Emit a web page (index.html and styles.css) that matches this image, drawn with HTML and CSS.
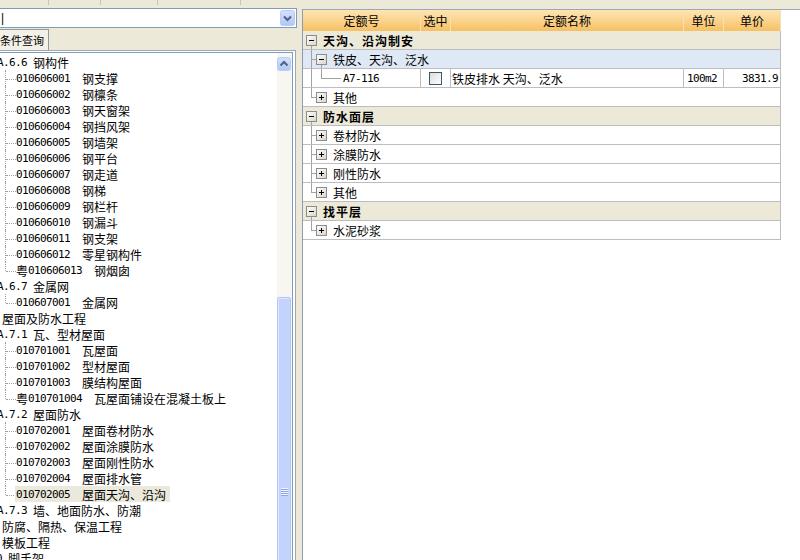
FILE: index.html
```html
<!DOCTYPE html>
<html>
<head>
<meta charset="utf-8">
<link rel="stylesheet" href="styles.css">
</head>
<body>
<svg class="defs" width="0" height="0">
  <defs>
    <linearGradient id="bxg" x1="0" y1="0" x2="1" y2="1">
      <stop offset="0" stop-color="#ffffff"/>
      <stop offset="1" stop-color="#d6d3c8"/>
    </linearGradient>
    <linearGradient id="btg" x1="0" y1="0" x2="0" y2="1">
      <stop offset="0" stop-color="#d3e0fd"/>
      <stop offset="1" stop-color="#b2c6f6"/>
    </linearGradient>
  </defs>
</svg>
<div class="app">
  <div class="topstrip"><span></span><span></span><span></span><span></span></div>
  <div class="main">
    <div class="left">
      <div class="combo">
        <span class="combo-text">|</span>
        <svg class="combo-btn" width="15" height="16" viewBox="0 0 15 16"><rect x="0.5" y="0.5" width="14" height="15" rx="2" fill="url(#btg)" stroke="#b9cbf6"/><path d="M4 6.5l3.5 3.5 3.5-3.5" stroke="#4d6185" stroke-width="2" fill="none"/></svg>
      </div>
      <div class="tabs"><div class="tab">条件查询</div></div>
      <div class="treebox">
        <div class="treeinner">
          <div class="tree">
            <div class="rows">
              <div class="row l1"><span class="m">A.6.6</span><span>钢构件</span></div>
              <div class="row l2"><span class="br"></span><span class="lbl"><span class="m">010606001</span><span>钢支撑</span></span></div>
              <div class="row l2"><span class="br"></span><span class="lbl"><span class="m">010606002</span><span>钢檩条</span></span></div>
              <div class="row l2"><span class="br"></span><span class="lbl"><span class="m">010606003</span><span>钢天窗架</span></span></div>
              <div class="row l2"><span class="br"></span><span class="lbl"><span class="m">010606004</span><span>钢挡风架</span></span></div>
              <div class="row l2"><span class="br"></span><span class="lbl"><span class="m">010606005</span><span>钢墙架</span></span></div>
              <div class="row l2"><span class="br"></span><span class="lbl"><span class="m">010606006</span><span>钢平台</span></span></div>
              <div class="row l2"><span class="br"></span><span class="lbl"><span class="m">010606007</span><span>钢走道</span></span></div>
              <div class="row l2"><span class="br"></span><span class="lbl"><span class="m">010606008</span><span>钢梯</span></span></div>
              <div class="row l2"><span class="br"></span><span class="lbl"><span class="m">010606009</span><span>钢栏杆</span></span></div>
              <div class="row l2"><span class="br"></span><span class="lbl"><span class="m">010606010</span><span>钢漏斗</span></span></div>
              <div class="row l2"><span class="br"></span><span class="lbl"><span class="m">010606011</span><span>钢支架</span></span></div>
              <div class="row l2"><span class="br"></span><span class="lbl"><span class="m">010606012</span><span>零星钢构件</span></span></div>
              <div class="row l2 last"><span class="br"></span><span class="lbl"><span>粤</span><span class="m">010606013</span><span>钢烟囱</span></span></div>
              <div class="row l1"><span class="m">A.6.7</span><span>金属网</span></div>
              <div class="row l2 last"><span class="br"></span><span class="lbl"><span class="m">010607001</span><span>金属网</span></span></div>
              <div class="row l0"><span class="m">A.7</span><span>屋面及防水工程</span></div>
              <div class="row l1"><span class="m">A.7.1</span><span>瓦、型材屋面</span></div>
              <div class="row l2"><span class="br"></span><span class="lbl"><span class="m">010701001</span><span>瓦屋面</span></span></div>
              <div class="row l2"><span class="br"></span><span class="lbl"><span class="m">010701002</span><span>型材屋面</span></span></div>
              <div class="row l2"><span class="br"></span><span class="lbl"><span class="m">010701003</span><span>膜结构屋面</span></span></div>
              <div class="row l2 last"><span class="br"></span><span class="lbl"><span>粤</span><span class="m">010701004</span><span>瓦屋面铺设在混凝土板上</span></span></div>
              <div class="row l1"><span class="m">A.7.2</span><span>屋面防水</span></div>
              <div class="row l2"><span class="br"></span><span class="lbl"><span class="m">010702001</span><span>屋面卷材防水</span></span></div>
              <div class="row l2"><span class="br"></span><span class="lbl"><span class="m">010702002</span><span>屋面涂膜防水</span></span></div>
              <div class="row l2"><span class="br"></span><span class="lbl"><span class="m">010702003</span><span>屋面刚性防水</span></span></div>
              <div class="row l2"><span class="br"></span><span class="lbl"><span class="m">010702004</span><span>屋面排水管</span></span></div>
              <div class="row l2 last sel"><span class="br"></span><span class="lbl"><span class="m">010702005</span><span>屋面天沟、沿沟</span></span></div>
              <div class="row l1"><span class="m">A.7.3</span><span>墙、地面防水、防潮</span></div>
              <div class="row l0"><span class="m">A.8</span><span>防腐、隔热、保温工程</span></div>
              <div class="row l0"><span class="m">A.9</span><span>模板工程</span></div>
              <div class="row l0"><span class="m">A.10</span><span>脚手架</span></div>
            </div>
          </div>
          <div class="vscroll">
            <svg class="sb-up" width="14" height="14" viewBox="0 0 14 14"><rect x="0.5" y="0.5" width="13" height="13" rx="2" fill="url(#btg)" stroke="#b9cbf6"/><path d="M3.5 8.5l3.5-3.5 3.5 3.5" stroke="#4d6185" stroke-width="2" fill="none"/></svg>
            <div class="sb-track"></div>
            <div class="sb-thumb"><div class="grip"></div></div>
          </div>
        </div>
      </div>
    </div>
    <div class="splitter"></div>
    <div class="right">
      <div class="grid">
        <div class="hd">定额号</div>
        <div class="hd">选中</div>
        <div class="hd">定额名称</div>
        <div class="hd">单位</div>
        <div class="hd">单价</div>

        <div class="cell span grp"><svg class="tg" width="20" height="18" viewBox="0 0 20 18"><rect class="bx" x="3.5" y="4.5" width="10" height="10"/><path class="sg" d="M6 9.5h5"/><path class="ln" d="M8.5 15v3"/></svg><span class="gt">天沟、沿沟制安</span></div>

        <div class="cell span sub"><svg class="tg" width="30" height="18" viewBox="0 0 30 18"><path class="ln" d="M8.5 0v18M9 9.5h4M18.5 15v3"/><rect class="bx" x="13.5" y="4.5" width="10" height="10"/><path class="sg" d="M16 9.5h5"/></svg><span>铁皮、天沟、泛水</span></div>

        <div class="cell"><svg class="tg" width="40" height="18" viewBox="0 0 40 18"><path class="ln" d="M8.5 0v18M18.5 0v10M19 9.5h19"/></svg><span class="m">A7-116</span></div>
        <div class="cell cbc"><span class="cb"></span></div>
        <div class="cell nm3">铁皮排水 天沟、泛水</div>
        <div class="cell unit"><span class="m">100m2</span></div>
        <div class="cell price"><span class="m">3831.9</span></div>

        <div class="cell span"><svg class="tg" width="30" height="18" viewBox="0 0 30 18"><path class="ln" d="M8.5 0v10M9 9.5h4"/><rect class="bx" x="13.5" y="4.5" width="10" height="10"/><path class="sg" d="M16 9.5h5M18.5 7v5"/></svg><span>其他</span></div>

        <div class="cell span grp"><svg class="tg" width="20" height="18" viewBox="0 0 20 18"><rect class="bx" x="3.5" y="4.5" width="10" height="10"/><path class="sg" d="M6 9.5h5"/><path class="ln" d="M8.5 15v3"/></svg><span class="gt">防水面层</span></div>

        <div class="cell span"><svg class="tg" width="30" height="18" viewBox="0 0 30 18"><path class="ln" d="M8.5 0v18M9 9.5h4"/><rect class="bx" x="13.5" y="4.5" width="10" height="10"/><path class="sg" d="M16 9.5h5M18.5 7v5"/></svg><span>卷材防水</span></div>
        <div class="cell span"><svg class="tg" width="30" height="18" viewBox="0 0 30 18"><path class="ln" d="M8.5 0v18M9 9.5h4"/><rect class="bx" x="13.5" y="4.5" width="10" height="10"/><path class="sg" d="M16 9.5h5M18.5 7v5"/></svg><span>涂膜防水</span></div>
        <div class="cell span"><svg class="tg" width="30" height="18" viewBox="0 0 30 18"><path class="ln" d="M8.5 0v18M9 9.5h4"/><rect class="bx" x="13.5" y="4.5" width="10" height="10"/><path class="sg" d="M16 9.5h5M18.5 7v5"/></svg><span>刚性防水</span></div>
        <div class="cell span"><svg class="tg" width="30" height="18" viewBox="0 0 30 18"><path class="ln" d="M8.5 0v10M9 9.5h4"/><rect class="bx" x="13.5" y="4.5" width="10" height="10"/><path class="sg" d="M16 9.5h5M18.5 7v5"/></svg><span>其他</span></div>

        <div class="cell span grp"><svg class="tg" width="20" height="18" viewBox="0 0 20 18"><rect class="bx" x="3.5" y="4.5" width="10" height="10"/><path class="sg" d="M6 9.5h5"/><path class="ln" d="M8.5 15v3"/></svg><span class="gt">找平层</span></div>

        <div class="cell span"><svg class="tg" width="30" height="18" viewBox="0 0 30 18"><path class="ln" d="M8.5 0v10M9 9.5h4"/><rect class="bx" x="13.5" y="4.5" width="10" height="10"/><path class="sg" d="M16 9.5h5M18.5 7v5"/></svg><span>水泥砂浆</span></div>
      </div>
    </div>
  </div>
</div>
</body>
</html>
```
FILE: styles.css
```css
* { box-sizing: border-box; }
html, body { margin: 0; padding: 0; }
body {
  width: 800px;
  height: 560px;
  overflow: hidden;
  background: #ece9d8;
  font-family: "Noto Sans CJK SC", "Liberation Sans", sans-serif;
  font-size: 12px;
  color: #000;
}
.defs { display: block; width: 0; height: 0; }

.topstrip { height: 8px; display: flex; }
.topstrip span { height: 5px; border-right: 1px solid #c9c5b5; flex: none; }
.topstrip span:nth-child(1) { width: 49px; }
.topstrip span:nth-child(2) { width: 52px; }
.topstrip span:nth-child(3) { width: 57px; }
.topstrip span:nth-child(4) { width: 83px; }

.main { display: flex; height: 552px; overflow: hidden; }

.left { width: 297px; flex: none; display: flex; flex-direction: column; }

.combo {
  flex: none;
  height: 20px;
  border: 1px solid #7f9db9;
  border-left: none;
  background: #fff;
  display: flex;
  align-items: center;
  justify-content: space-between;
}
.combo-text { font-family: "Liberation Sans", sans-serif; font-size: 12px; padding-left: 1px; line-height: 1; }
.combo-btn { display: block; margin-right: 1px; flex: none; }

.tabs { flex: none; height: 22px; padding-top: 1px; display: flex; }
.tab {
  width: 49px;
  border-top: 1px solid #919b9c;
  border-right: 1px solid #919b9c;
  background: #f3f1e7;
  font-size: 11px;
  display: flex;
  align-items: center;
  white-space: nowrap;
}

.treebox {
  width: 296px;
  height: 540px;
  flex: none;
  border-top: 1px solid #9ba7b9;
  border-right: 1px solid #9ba7b9;
  padding: 1px 2px 0 0;
  background: #fff;
}
.treeinner {
  height: 100%;
  border-top: 1px solid #7f9db9;
  border-right: 1px solid #7f9db9;
  display: flex;
}
.tree { flex: 1; overflow: hidden; padding-top: 1px; }
.rows { margin-left: -22px; }
.row { display: flex; align-items: center; height: 16px; flex: none; white-space: nowrap; }
.l1 { padding-left: 19px; }
.l2 { padding-left: 27px; }
.m {
  font-family: "DejaVu Sans Mono", monospace;
  font-size: 11px;
  letter-spacing: -0.62px;
}
.row .m { margin-right: 6px; }
.l2 .m { margin-right: 12px; }
.br {
  flex: none;
  align-self: stretch;
  width: 11px;
  border-left: 1px dotted #a0a0a0;
}
.br::after {
  content: "";
  display: block;
  height: 9px;
  border-bottom: 1px dotted #a0a0a0;
}
.last .br { align-self: flex-start; height: 9px; }
.last .br::after { height: 9px; }
.lbl { display: flex; align-items: center; align-self: stretch; padding: 0 4px 0 1px; margin-left: -1px; }
.sel .lbl { background: #ebe9db; }

.vscroll {
  width: 15px;
  flex: none;
  background: #f7f6f1;
  display: flex;
  flex-direction: column;
  padding-top: 4px;
}
.sb-up { display: block; flex: none; }
.sb-track { height: 226px; flex: none; }
.sb-thumb {
  width: 14px;
  height: 390px;
  flex: none;
  background: #c3d3fd;
  border: 1px solid #b3c6f5;
  border-radius: 2px;
  box-shadow: inset 1px 1px 0 #dfe8fe;
  display: flex;
  align-items: center;
  justify-content: center;
}
.grip {
  width: 7px;
  height: 8px;
  background: repeating-linear-gradient(to bottom, #eef3fe 0 1px, #8ea8e6 1px 2px);
}

.splitter { width: 5px; flex: none; }

.right {
  flex: 1;
  margin-top: 1px;
  border-top: 1px solid #9aa7b7;
  border-left: 1px solid #8d9cb3;
  background: #fff;
}
.grid {
  display: grid;
  grid-template-columns: 118px 30px 233px 40px 57px;
  width: 478px;
}
.hd {
  height: 21px;
  background: linear-gradient(to bottom, #fde5b3 0%, #fbd796 40%, #f6c062 100%);
  border-right: 1px solid #f8e0b4;
  display: flex;
  align-items: center;
  justify-content: center;
  white-space: nowrap;
}
.hd:last-child { border-right: none; }
.cell {
  height: 19px;
  border-bottom: 1px solid #bdbdbd;
  border-right: 1px solid #bdbdbd;
  display: flex;
  align-items: center;
  white-space: nowrap;
  overflow: hidden;
}
.span { grid-column: 1 / -1; }
.grp { background: #ece9d8; }
.gt { font-weight: bold; letter-spacing: 1px; }
.sub { background: #dfe8f5; }
.tg { display: block; flex: none; }
.ln { stroke: #a3a3a3; fill: none; }
.bx { fill: url(#bxg); stroke: #8c8c8c; }
.sg { stroke: #000; fill: none; }
.cbc { justify-content: center; }
.cb {
  width: 13px;
  height: 13px;
  border: 1px solid #3a5675;
  background: linear-gradient(135deg, #dcdcd7, #ffffff);
}
.nm3 { padding-left: 1px; }
.unit { padding-left: 3px; }
.price { justify-content: flex-end; padding-right: 2px; }
```
